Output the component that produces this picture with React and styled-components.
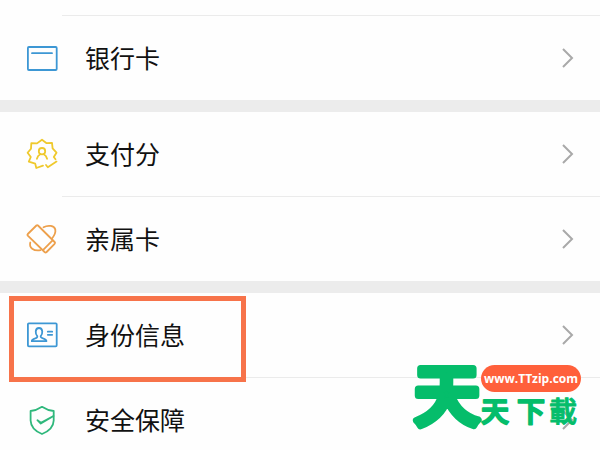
import React from "react";
import styled, {createGlobalStyle} from "styled-components";

const GlobalStyle = createGlobalStyle`
    *{box-sizing:border-box;}
    body{margin:0;background:#fefefe;color:#111;font-family:"Noto Sans CJK SC","Liberation Sans",sans-serif;}
    a{color:inherit;text-decoration:none;}
`;
const Page = styled.main`
    position:relative;height:100vh;overflow:hidden;
`;
const Group = styled.ul`
    list-style:none;margin:0;padding:0;
    & + &{border-top:12px solid #ececec;}
`;
const Item = styled.li`
    position:relative;
    & + &::before{content:"";display:block;height:1px;margin-left:62px;background:#ebebeb;}
`;
const Row = styled.a`
    display:flex;align-items:center;height:84px;padding:0 26px;
    & .label{flex:1;padding:0 0 2px 27px;font-size:25px;line-height:36px;}
`;
const PrevRow = styled.div`
    height:15px;
`;
const Icon = styled.svg`
    flex:none;width:32px;height:32px;fill:none;stroke:${({$color}) => $color};stroke-width:1.8;stroke-linecap:round;stroke-linejoin:round;
`;
const Chevron = styled.svg`
    flex:none;width:12px;height:20px;fill:none;stroke:#a9a9a9;stroke-width:2;
`;
const Highlight = styled.span`
    position:absolute;top:3px;left:9px;width:237px;height:86px;border:5px solid #f7734a;z-index:1;pointer-events:none;
`;
const Brand = styled.div`
    position:absolute;right:19px;bottom:16px;z-index:2;display:flex;align-items:flex-end;
    & .side{display:flex;flex-direction:column;gap:4px;width:100px;}
    & .site{height:27px;border-radius:14px;background:#ff603b;color:#fff;font:bold 12px/28px "Open Sans",sans-serif;text-align:center;}
`;
const Logo = styled.svg`
    display:block;flex:none;overflow:visible;fill:#05bd6b;stroke:#05bd6b;stroke-width:${({$stroke}) => $stroke};stroke-linejoin:round;stroke-linecap:round;font-weight:500;
    & .dense{stroke-width:1;}
`;

const CardIcon = () => (
    <Icon viewBox="0 0 32 32" $color="#3d97d4" aria-hidden="true">
        <rect x="1.9" y="5" width="28.8" height="23" rx="1" />
        <path d="M6 11.2h20" />
    </Icon>
);
const ScoreIcon = () => (
    <Icon viewBox="0 0 32 32" $color="#efc92d" aria-hidden="true">
        <path d="M17 27.6 10.3 30 9.2 25.6 2.8 23.6 4.8 19 1.6 14.8 5 10.7 5.3 5.2 11 5.4 16 1.7 20.6 5.2 26 4.9 26.6 10.4 30.5 14.7 27.8 19 29.5 21.2" />
        <path d="M30.5 23.6 21.8 29.2 20 27" />
        <circle cx="16" cy="13.2" r="3.2" />
        <path d="M10.9 20.8q.8-3.4 3.4-4.6M21.1 20.8q-.8-3.4-3.4-4.6" />
    </Icon>
);
const FamilyIcon = () => (
    <Icon viewBox="0 0 32 32" $color="#eda04c" aria-hidden="true">
        <path d="M10.4 2.5 1.8 11q-.7.8 0 1.6L18.6 29q1 .9 2 0l8-8.2q.8-1 0-1.8L12 2.5q-.8-.8-1.6 0z" />
        <path d="M17.2 26.8 26.6 17.4M17.5 4.3C22 1.7 28.5 2.6 29.3 6.5 29.8 9.5 28.4 12.5 26 15.5M4.3 19.5C2.8 24.5 7.5 28.4 14.5 27.2" />
    </Icon>
);
const IdIcon = () => (
    <Icon viewBox="0 0 32 32" $color="#3d97d4" aria-hidden="true">
        <rect x="1.9" y="4.3" width="28.8" height="23" rx="1" />
        <path d="M11.3 17.2C9.3 15.3 8.6 9 13 9s3.7 6.3 1.7 8.2c-.3 1.4.8 1.7 2.5 2.3 2 .7 3.2 1 3.2 2.7H5.8c0-1.7 1.2-2 3.2-2.7 1.7-.6 2.6-.9 2.3-2.3z" />
        <path d="M21.8 12.7h4.4M21.8 15.8h4.4" />
    </Icon>
);
const ShieldIcon = () => (
    <Icon viewBox="0 0 32 32" $color="#2fb87c" aria-hidden="true">
        <path d="M16 2.8Q21.5 6.5 27.7 7V16.5Q27.4 25.5 16 30 4.9 25.5 4.6 16.5V7Q10.5 6.5 16 2.8z" />
        <path d="M27.5 12 14.9 18.8 11.4 16.2 14.8 19.6z" />
    </Icon>
);

const groups = [
    [{name: "银行卡", icon: CardIcon}],
    [{name: "支付分", icon: ScoreIcon}, {name: "亲属卡", icon: FamilyIcon}],
    [{name: "身份信息", icon: IdIcon, marked: true}, {name: "安全保障", icon: ShieldIcon}],
];

const App = () => {
    return (
        <Page>
            <GlobalStyle />
            {groups.map((items, i) => (
                <Group key={i}>
                    {i === 0 && <Item><PrevRow /></Item>}
                    {items.map(({name, icon: ItemIcon, marked}) => (
                        <Item key={name}>
                            <Row href="#">
                                <ItemIcon />
                                <span className="label">{name}</span>
                                <Chevron viewBox="0 0 12 20" aria-hidden="true"><path d="M1 1 10 10 1 19" /></Chevron>
                            </Row>
                            {marked && <Highlight />}
                        </Item>
                    ))}
                </Group>
            ))}
            <Brand>
                <Logo width="68" height="72" $stroke={7}>
                    <text x="34" y="58" fontSize="66" textAnchor="middle">天</text>
                </Logo>
                <div className="side">
                    <a className="site" href="#">www.TTzip.com</a>
                    <Logo width="100" height="38" $stroke={2}>
                        <text y="26" fontSize="28" textAnchor="middle">
                            <tspan x="14">天</tspan><tspan x="50">下</tspan><tspan x="82" className="dense">載</tspan>
                        </text>
                    </Logo>
                </div>
            </Brand>
        </Page>
    );
}
export default App;
